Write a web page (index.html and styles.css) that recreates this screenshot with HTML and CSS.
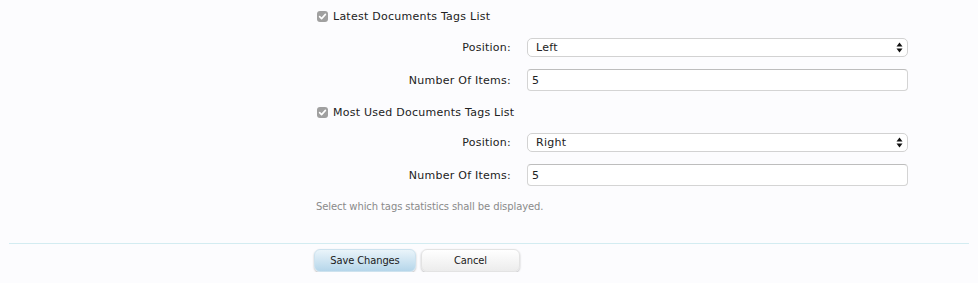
FILE: index.html
```html
<!DOCTYPE html>
<html>
<head>
<meta charset="utf-8">
<link rel="stylesheet" href="styles.css">
</head>
<body>
<div class="page">
  <div class="options">
    <label class="check-row"><span class="check"><svg viewBox="0 0 11 11" width="11" height="11"><path d="M2.6 5.6 L4.6 7.6 L8.4 3.4" fill="none" stroke="#fff" stroke-width="1.6" stroke-linecap="round" stroke-linejoin="round"/></svg></span><span>Latest Documents Tags List</span></label>
    <div class="field-row sel1">
      <span class="label">Position:</span>
      <div class="select"><span>Left</span><svg class="arrows" viewBox="0 0 7 11" width="7" height="11"><path d="M3.5 0.5 L6.5 4.5 L0.5 4.5 Z M3.5 10.5 L6.5 6.5 L0.5 6.5 Z" fill="#111"/></svg></div>
    </div>
    <div class="field-row num">
      <span class="label">Number Of Items:</span>
      <div class="input">5</div>
    </div>
    <label class="check-row second"><span class="check"><svg viewBox="0 0 11 11" width="11" height="11"><path d="M2.6 5.6 L4.6 7.6 L8.4 3.4" fill="none" stroke="#fff" stroke-width="1.6" stroke-linecap="round" stroke-linejoin="round"/></svg></span><span>Most Used Documents Tags List</span></label>
    <div class="field-row sel2">
      <span class="label">Position:</span>
      <div class="select"><span>Right</span><svg class="arrows" viewBox="0 0 7 11" width="7" height="11"><path d="M3.5 0.5 L6.5 4.5 L0.5 4.5 Z M3.5 10.5 L6.5 6.5 L0.5 6.5 Z" fill="#111"/></svg></div>
    </div>
    <div class="field-row num">
      <span class="label">Number Of Items:</span>
      <div class="input">5</div>
    </div>
    <p class="hint">Select which tags statistics shall be displayed.</p>
  </div>
  <div class="submit">
    <button class="btn primary">Save Changes</button>
    <button class="btn cancel">Cancel</button>
  </div>
</div>
</body>
</html>
```
FILE: styles.css
```css
html, body {
  margin: 0;
  background: #fcfcfe;
}
body {
  font-family: "DejaVu Sans", Verdana, sans-serif;
  font-size: 11px;
  letter-spacing: 0.25px;
  color: #222;
}
.page {
  padding: 0 9px;
}
.options {
  margin-left: 307px;
  padding-top: 8px;
}
.check-row {
  display: flex;
  align-items: center;
  gap: 5px;
  height: 16px;
  padding-left: 1px;
}
.check-row.second {
  margin-top: 13px;
}
.check {
  width: 11px;
  height: 11px;
  border-radius: 3px;
  background: #a0a0a0;
  display: flex;
}
.field-row {
  display: grid;
  grid-template-columns: 195px 381px;
  column-gap: 16px;
  align-items: center;
}
.field-row.sel1 {
  margin-top: 14px;
}
.field-row.sel2 {
  margin-top: 13px;
}
.field-row.num {
  margin-top: 12px;
}
.label {
  text-align: right;
}
.select {
  position: relative;
  box-sizing: border-box;
  height: 19px;
  border: 1px solid #d2d2d2;
  border-radius: 5px;
  background: #fff;
  display: flex;
  align-items: center;
  padding-left: 8px;
}
.arrows {
  position: absolute;
  right: 4px;
  top: 3px;
}
.input {
  box-sizing: border-box;
  height: 22px;
  border: 1px solid #d4d4d4;
  border-top-color: #bdbdbd;
  border-radius: 4px;
  background: #fff;
  display: flex;
  align-items: center;
  padding-left: 4px;
}
.hint {
  margin: 14px 0 0;
  color: #8a8a8a;
  font-size: 10px;
  letter-spacing: -0.1px;
  line-height: 13px;
}
.submit {
  margin-top: 30px;
  border-top: 1px solid #d3ecf1;
  padding: 5px 0 0 305px;
  display: flex;
  gap: 5px;
}
.btn {
  font-family: "DejaVu Sans Condensed", "DejaVu Sans", sans-serif;
  font-size: 11px;
  letter-spacing: -0.1px;
  color: #1a1a1a;
  width: 102px;
  height: 23px;
  border: 1px solid #e3e3e3;
  border-radius: 6px;
  background: linear-gradient(#ffffff, #ececec);
  box-shadow: 0 1px 2px rgba(0,0,0,0.25);
  padding: 0;
}
.btn.cancel {
  width: 99px;
}
.btn.primary {
  border-color: #cde2ee;
  background: linear-gradient(#eaf4fa, #b5d6ea);
}
```
